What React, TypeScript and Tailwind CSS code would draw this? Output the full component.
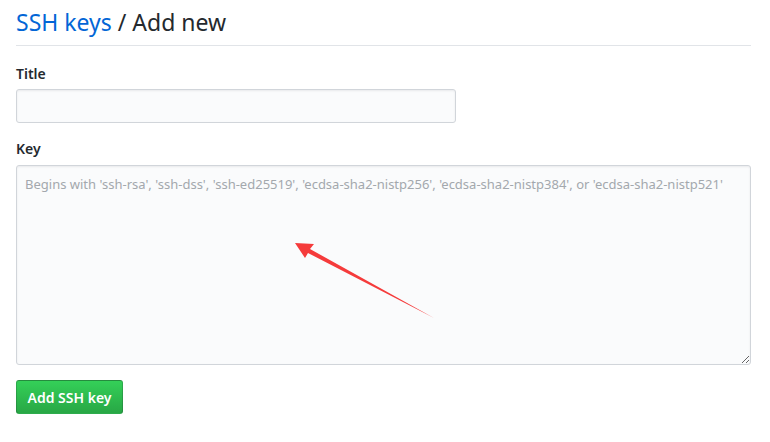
export default function App() {
  return (
    <div className="min-h-screen w-full bg-white font-['Noto_Sans','Open_Sans',sans-serif] text-[#24292e]">
      <div className="ml-4 w-[735px] pt-[6px]">
        <h2 className="border-b border-[#e1e4e8] pb-[7px] text-[23px] leading-[32px] font-normal">
          <a className="text-[#0366d6]">SSH keys</a> / Add new
        </h2>

        <form className="mt-[18px]">
          <label className="block text-[14px] font-semibold leading-[20px]">Title</label>
          <input
            type="text"
            className="mt-[5px] block h-[34px] w-[440px] rounded-[3px] border border-[#d1d5da] bg-[#fafbfc] px-2 text-[14px] shadow-[inset_0_1px_2px_rgba(27,31,35,0.075)] outline-none"
          />

          <label className="mt-[16px] block text-[14px] font-semibold leading-[20px]">Key</label>
          <div className="relative mt-[6px]">
            <textarea
              placeholder="Begins with 'ssh-rsa', 'ssh-dss', 'ssh-ed25519', 'ecdsa-sha2-nistp256', 'ecdsa-sha2-nistp384', or 'ecdsa-sha2-nistp521'"
              className="block h-[200px] w-full resize-y rounded-[3px] border border-[#d1d5da] bg-[#fafbfc] px-2 py-[8px] text-[13px] leading-[20px] shadow-[inset_0_1px_2px_rgba(27,31,35,0.075)] outline-none placeholder:text-[#a3a8ad]"
            />
            {/* annotation arrow */}
            <svg
              className="pointer-events-none absolute left-0 top-0"
              width="735"
              height="200"
              viewBox="0 0 735 200"
            >
              <path
                d="M279 78 L298 79 L294 84 L418 153 L292 88 L289 93 Z"
                fill="#f53b3b"
              />
            </svg>
          </div>

          <button
            type="button"
            className="mt-[15px] h-[34px] w-[107px] rounded-[3px] border border-[rgba(27,31,35,0.2)] bg-gradient-to-b from-[#34d058] to-[#28a745] text-[14px] font-semibold text-white"
          >
            Add SSH key
          </button>
        </form>
      </div>
    </div>
  );
}
